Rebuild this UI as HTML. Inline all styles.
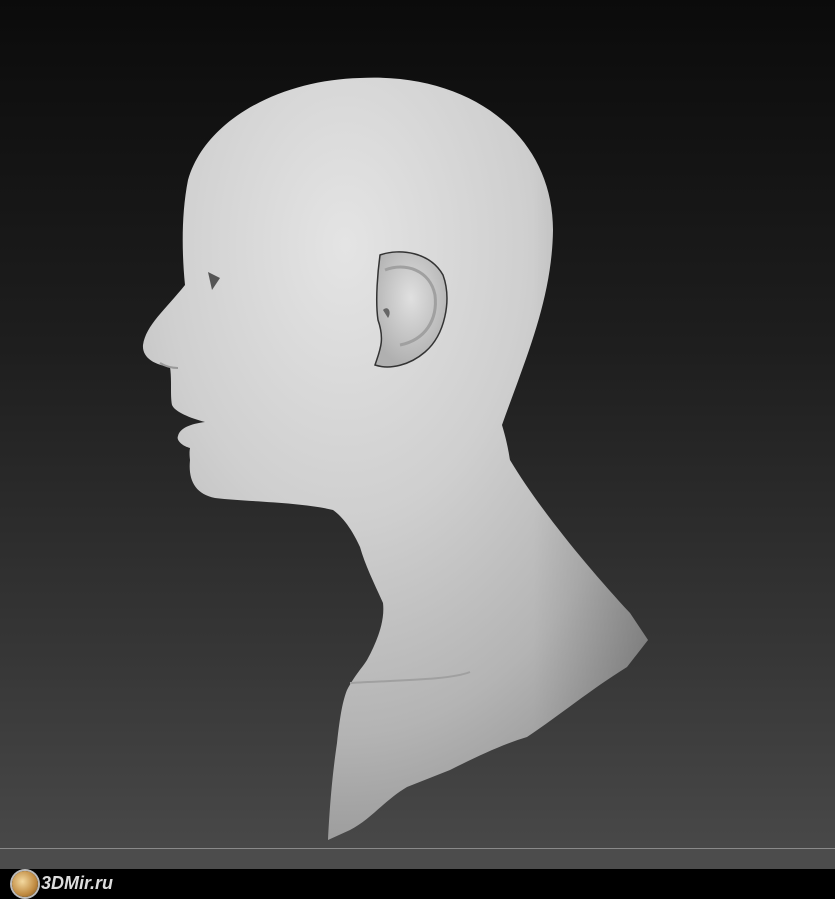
<!DOCTYPE html>
<html><head><style>
html,body{margin:0;padding:0;width:835px;height:899px;overflow:hidden;background:#000}
.bg{position:absolute;left:0;top:0;width:835px;height:869px;background:linear-gradient(#0b0b0b 0%,#1e1e1e 40%,#363636 75%,#4a4a4a 100%)}
.line{position:absolute;left:0;top:848px;width:835px;height:1px;background:#8a8a8a}
.low{position:absolute;left:0;top:849px;width:835px;height:20px;background:#4c4c4c}
.bar{position:absolute;left:0;top:869px;width:835px;height:30px;background:#000}
.logo{position:absolute;left:12px;top:871px;width:26px;height:26px;border-radius:50%;background:radial-gradient(circle at 40% 40%,#f3d9a0,#c08a40 60%,#6a4a20);box-shadow:0 0 0 2px #bbb}
.txt{position:absolute;left:41px;top:873px;font:italic bold 18px "Liberation Sans",sans-serif;color:#ddd}
svg{position:absolute;left:0;top:0}
</style></head><body>
<div class="bg"></div><div class="line"></div><div class="low"></div>
<svg width="835" height="869">
<defs>
<radialGradient id="g" cx="0.4" cy="0.22" r="0.8">
<stop offset="0" stop-color="#e4e4e4"/><stop offset="0.45" stop-color="#cfcfcf"/><stop offset="0.8" stop-color="#b4b4b4"/><stop offset="1" stop-color="#9a9a9a"/>
</radialGradient>
<radialGradient id="e" cx="0.5" cy="0.4" r="0.6"><stop offset="0" stop-color="#e0e0e0"/><stop offset="1" stop-color="#b0b0b0"/></radialGradient>
<linearGradient id="sh" x1="0" y1="0" x2="1" y2="0"><stop offset="0.6" stop-color="#000" stop-opacity="0"/><stop offset="1" stop-color="#000" stop-opacity="0.18"/></linearGradient>
</defs>
<g>
<path id="hd" fill="url(#g)" d="M360,78 C470,72 553,135 553,230 C552,300 525,360 502,425 C508,445 509,455 510,460 C540,510 590,570 630,613 L648,640 L627,667 C590,690 560,715 527,737 C500,745 470,760 450,770 L407,787 C385,800 370,820 350,830 L328,840 C330,800 333,770 337,743 C340,715 343,700 347,690 C355,675 362,668 367,660 C378,640 385,620 383,603 C375,585 365,565 360,547 C350,525 340,515 333,510 C300,502 250,502 215,498 C195,494 188,480 190,460 C189,452 190,449 190,448 C182,446 176,440 178,436 C180,428 190,424 205,422 C190,418 175,412 172,405 C170,395 172,380 170,367 C155,365 142,358 143,345 C146,325 165,310 185,285 C182,255 181,215 188,180 C205,120 280,80 360,78 Z"/>
<path fill="url(#sh)" d="M360,78 C470,72 553,135 553,230 C552,300 525,360 502,425 C508,445 509,455 510,460 C540,510 590,570 630,613 L648,640 L627,667 C590,690 560,715 527,737 L400,760 L400,78 Z"/>
</g>
<path fill="url(#e)" stroke="#333" stroke-width="1.5" d="M380,255 C400,248 430,252 443,275 C452,300 445,335 425,352 C410,365 390,370 375,365 C380,350 385,340 378,320 C375,300 378,270 380,255 Z"/>
<path fill="none" stroke="#a0a0a0" stroke-width="3" d="M385,270 C405,262 430,270 435,295 C438,320 425,340 400,345"/>
<path fill="#666" d="M383,310 C388,305 392,312 388,318 Z"/>
<path fill="#555" d="M208,272 L220,278 L212,290 Z"/>
<path fill="none" stroke="#999" stroke-width="2" d="M160,363 C165,366 172,368 178,368"/>
<path fill="none" stroke="#a0a0a0" stroke-width="2" d="M350,683 C400,680 450,680 470,672"/>
</svg>
<div class="bar"></div><div class="logo"></div><div class="txt">3DMir.ru</div>
</body></html>
